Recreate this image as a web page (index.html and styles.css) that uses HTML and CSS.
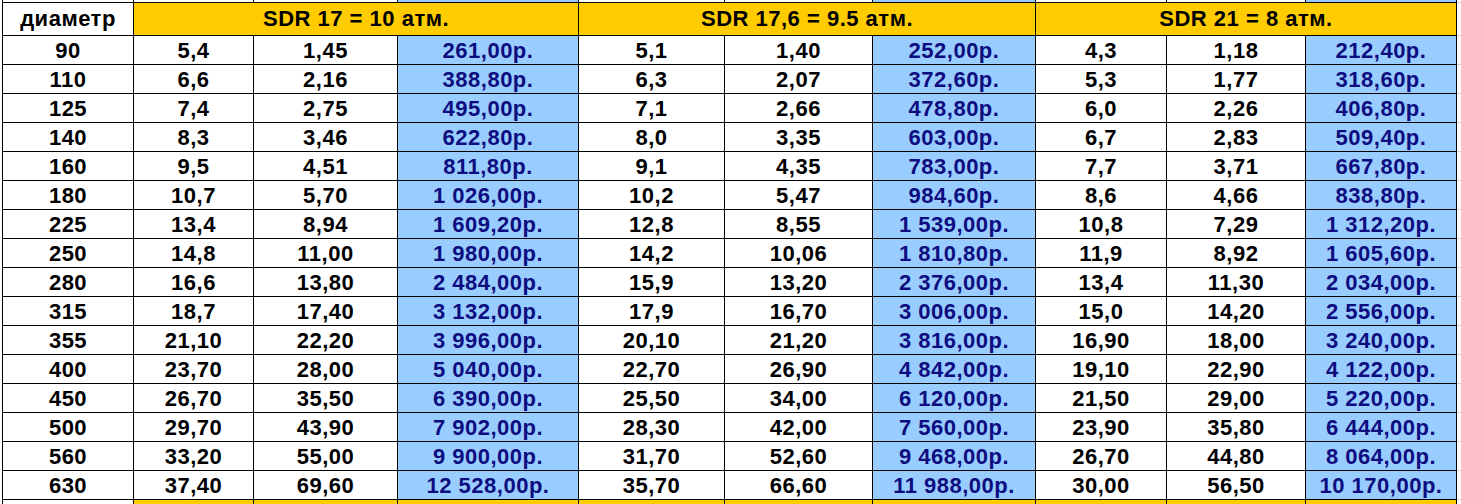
FILE: index.html
```html
<!DOCTYPE html>
<html lang="ru">
<head>
<meta charset="utf-8">
<title>SDR</title>
<link rel="stylesheet" href="styles.css">
</head>
<body>
<table class="sheet">
  <colgroup>
    <col class="c0"><col class="c1"><col class="c2"><col class="c3"><col class="c4"><col class="c5"><col class="c6"><col class="c7"><col class="c8"><col class="c9"><col class="cx">
  </colgroup>
  <tr class="stub">
    <td></td><td></td><td></td><td class="price"></td><td></td><td></td><td class="price"></td><td></td><td></td><td class="price"></td><td class="grid"></td>
  </tr>
  <tr class="head">
    <td class="label">диаметр</td>
    <td class="sdr" colspan="3">SDR 17 = 10 атм.</td>
    <td class="sdr" colspan="3">SDR 17,6 = 9.5 атм.</td>
    <td class="sdr" colspan="3">SDR 21 = 8 атм.</td>
    <td class="grid"></td>
  </tr>
  <tr><td>90</td><td>5,4</td><td>1,45</td><td class="price">261,00р.</td><td>5,1</td><td>1,40</td><td class="price">252,00р.</td><td>4,3</td><td>1,18</td><td class="price">212,40р.</td><td class="grid"></td></tr>
  <tr><td>110</td><td>6,6</td><td>2,16</td><td class="price">388,80р.</td><td>6,3</td><td>2,07</td><td class="price">372,60р.</td><td>5,3</td><td>1,77</td><td class="price">318,60р.</td><td class="grid"></td></tr>
  <tr><td>125</td><td>7,4</td><td>2,75</td><td class="price">495,00р.</td><td>7,1</td><td>2,66</td><td class="price">478,80р.</td><td>6,0</td><td>2,26</td><td class="price">406,80р.</td><td class="grid"></td></tr>
  <tr><td>140</td><td>8,3</td><td>3,46</td><td class="price">622,80р.</td><td>8,0</td><td>3,35</td><td class="price">603,00р.</td><td>6,7</td><td>2,83</td><td class="price">509,40р.</td><td class="grid"></td></tr>
  <tr><td>160</td><td>9,5</td><td>4,51</td><td class="price">811,80р.</td><td>9,1</td><td>4,35</td><td class="price">783,00р.</td><td>7,7</td><td>3,71</td><td class="price">667,80р.</td><td class="grid"></td></tr>
  <tr><td>180</td><td>10,7</td><td>5,70</td><td class="price">1&nbsp;026,00р.</td><td>10,2</td><td>5,47</td><td class="price">984,60р.</td><td>8,6</td><td>4,66</td><td class="price">838,80р.</td><td class="grid"></td></tr>
  <tr><td>225</td><td>13,4</td><td>8,94</td><td class="price">1&nbsp;609,20р.</td><td>12,8</td><td>8,55</td><td class="price">1&nbsp;539,00р.</td><td>10,8</td><td>7,29</td><td class="price">1&nbsp;312,20р.</td><td class="grid"></td></tr>
  <tr><td>250</td><td>14,8</td><td>11,00</td><td class="price">1&nbsp;980,00р.</td><td>14,2</td><td>10,06</td><td class="price">1&nbsp;810,80р.</td><td>11,9</td><td>8,92</td><td class="price">1&nbsp;605,60р.</td><td class="grid"></td></tr>
  <tr><td>280</td><td>16,6</td><td>13,80</td><td class="price">2&nbsp;484,00р.</td><td>15,9</td><td>13,20</td><td class="price">2&nbsp;376,00р.</td><td>13,4</td><td>11,30</td><td class="price">2&nbsp;034,00р.</td><td class="grid"></td></tr>
  <tr><td>315</td><td>18,7</td><td>17,40</td><td class="price">3&nbsp;132,00р.</td><td>17,9</td><td>16,70</td><td class="price">3&nbsp;006,00р.</td><td>15,0</td><td>14,20</td><td class="price">2&nbsp;556,00р.</td><td class="grid"></td></tr>
  <tr><td>355</td><td>21,10</td><td>22,20</td><td class="price">3&nbsp;996,00р.</td><td>20,10</td><td>21,20</td><td class="price">3&nbsp;816,00р.</td><td>16,90</td><td>18,00</td><td class="price">3&nbsp;240,00р.</td><td class="grid"></td></tr>
  <tr><td>400</td><td>23,70</td><td>28,00</td><td class="price">5&nbsp;040,00р.</td><td>22,70</td><td>26,90</td><td class="price">4&nbsp;842,00р.</td><td>19,10</td><td>22,90</td><td class="price">4&nbsp;122,00р.</td><td class="grid"></td></tr>
  <tr><td>450</td><td>26,70</td><td>35,50</td><td class="price">6&nbsp;390,00р.</td><td>25,50</td><td>34,00</td><td class="price">6&nbsp;120,00р.</td><td>21,50</td><td>29,00</td><td class="price">5&nbsp;220,00р.</td><td class="grid"></td></tr>
  <tr><td>500</td><td>29,70</td><td>43,90</td><td class="price">7&nbsp;902,00р.</td><td>28,30</td><td>42,00</td><td class="price">7&nbsp;560,00р.</td><td>23,90</td><td>35,80</td><td class="price">6&nbsp;444,00р.</td><td class="grid"></td></tr>
  <tr><td>560</td><td>33,20</td><td>55,00</td><td class="price">9&nbsp;900,00р.</td><td>31,70</td><td>52,60</td><td class="price">9&nbsp;468,00р.</td><td>26,70</td><td>44,80</td><td class="price">8&nbsp;064,00р.</td><td class="grid"></td></tr>
  <tr><td>630</td><td>37,40</td><td>69,60</td><td class="price">12&nbsp;528,00р.</td><td>35,70</td><td>66,60</td><td class="price">11&nbsp;988,00р.</td><td>30,00</td><td>56,50</td><td class="price">10&nbsp;170,00р.</td><td class="grid"></td></tr>
  <tr class="tail">
    <td></td><td class="sdr"></td><td class="sdr"></td><td class="sdr"></td><td class="sdr"></td><td class="sdr"></td><td class="sdr"></td><td class="sdr"></td><td class="sdr"></td><td class="sdr"></td><td class="grid"></td>
  </tr>
</table>
</body>
</html>
```

FILE: styles.css
```css
html, body {
  margin: 0;
  padding: 0;
  background: #ffffff;
}

body {
  width: 1461px;
  height: 504px;
  overflow: hidden;
}

.sheet {
  border-collapse: collapse;
  table-layout: fixed;
  width: 1459px;
  margin-left: 2px;
  font-family: "Liberation Sans", Arial, sans-serif;
  font-weight: bold;
  font-size: 22px;
  letter-spacing: 0.5px;
  color: #000000;
}

.c0 { width: 131px; }
.c1 { width: 120px; }
.c2 { width: 144px; }
.c3 { width: 181px; }
.c4 { width: 146px; }
.c5 { width: 148px; }
.c6 { width: 163px; }
.c7 { width: 131px; }
.c8 { width: 139px; }
.c9 { width: 151px; }
.cx { width: 5px; }

.sheet td {
  border: 1px solid #000000;
  padding: 0;
  height: 28px;
  line-height: 27px;
  text-align: center;
  vertical-align: middle;
  white-space: nowrap;
  overflow: hidden;
}

.sheet td.price {
  background: #99ccff;
  color: #0d0d80;
}

.sheet td.sdr {
  background: #ffcc00;
  color: #000000;
}

.sheet td.grid {
  border-color: #d4d4d4;
  border-right: none;
}

.sheet .stub td {
  height: 2px;
  line-height: 2px;
  border-top: none;
}

.sheet .head td {
  height: 32px;
  line-height: 30px;
}

.sheet .tail td {
  height: 6px;
  line-height: 6px;
  border-bottom: none;
}
```
